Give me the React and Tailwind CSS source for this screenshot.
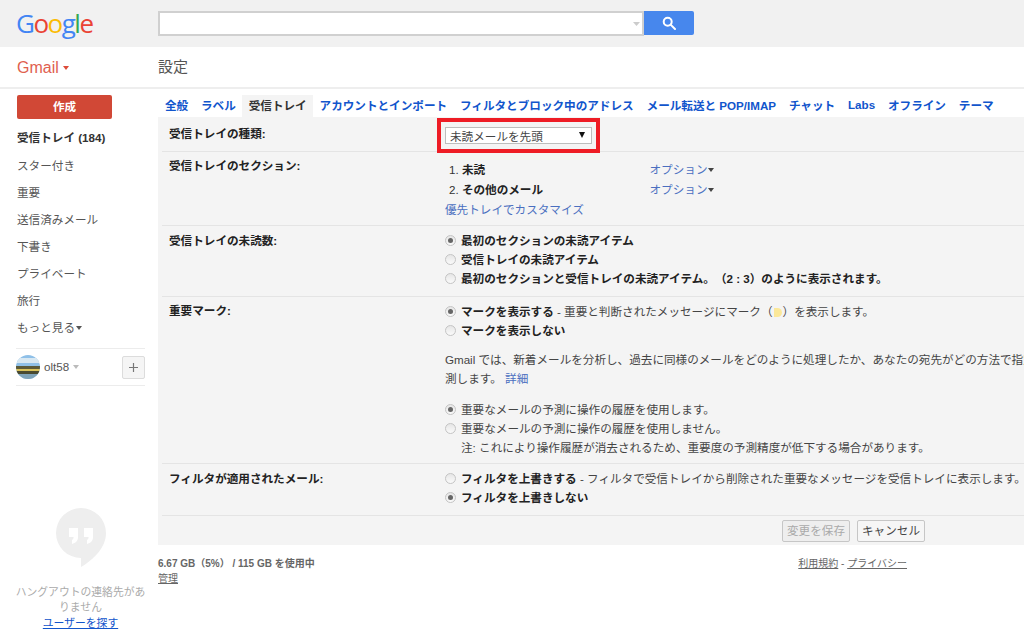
const Caret = ({ c = "#444", w = 7, h = 4, className = "" }) => (
  <svg width={w} height={h} viewBox="0 0 7 4" preserveAspectRatio="none" className={"inline-block align-middle " + className}>
    <path d="M0 0h7L3.5 4z" fill={c} />
  </svg>
);

const Radio = ({ on }) => (
  <span className="mr-[5px] inline-flex h-[11px] w-[11px] shrink-0 items-center justify-center rounded-full border border-[#c4c4c4] bg-gradient-to-b from-[#e6e6e6] to-[#fafafa] align-[-1px]">
    {on && <span className="h-[5px] w-[5px] rounded-full bg-[#666]" />}
  </span>
);

const Line = ({ on, children, className = "" }) => (
  <div className={"flex h-[19px] items-center whitespace-nowrap leading-[19px] " + className}>
    <Radio on={on} />
    <span>{children}</span>
  </div>
);

const Row = ({ label, labelClass = "pt-[5px]", className = "", children }) => (
  <div className={"ml-[4px] flex border-b border-[#e4e4e4] " + className}>
    <div className={"ml-[7px] w-[276px] shrink-0 font-bold text-[#222] leading-[19px] " + labelClass}>{label}</div>
    <div className="min-w-0 flex-1 whitespace-nowrap">{children}</div>
  </div>
);

const tabs = [
  ["全般", false],
  ["ラベル", false],
  ["受信トレイ", true],
  ["アカウントとインポート", false],
  ["フィルタとブロック中のアドレス", false],
  ["メール転送と POP/IMAP", false],
  ["チャット", false],
  ["Labs", false],
  ["オフライン", false],
  ["テーマ", false],
];

const nav = ["スター付き", "重要", "送信済みメール", "下書き", "プライベート", "旅行"];

export default function App() {
  return (
    <div className="h-[638px] w-[1024px] overflow-hidden bg-white font-['Liberation_Sans','Noto_Sans_CJK_JP',sans-serif] text-[11.6px] text-[#444] [text-spacing-trim:space-all]">
      {/* top bar */}
      <header className="flex h-[47px] items-start bg-[#f1f1f1]">
        <div className="w-[158px] pl-[16px] pt-[2px] font-['Open_Sans',sans-serif] text-[26px] leading-[42px] tracking-[-1.5px]">
          <span className="text-[#4285f4]">G</span>
          <span className="text-[#ea4335]">o</span>
          <span className="text-[#fbbc05]">o</span>
          <span className="text-[#4285f4]">g</span>
          <span className="text-[#34a853]">l</span>
          <span className="text-[#ea4335]">e</span>
        </div>
        <div className="mt-[11px] flex h-[25px] w-[486px] items-center justify-end border-2 border-[#d0d0d0] bg-white pr-[2px]">
          <Caret c="#ccc" w={7} />
        </div>
        <div className="mt-[11px] flex h-[24px] w-[50px] items-center justify-center rounded-r-[2px] bg-[#4787ed]">
          <svg width="14" height="14" viewBox="0 0 14 14" fill="none" stroke="#fff" strokeWidth="2">
            <circle cx="5.7" cy="5.7" r="4" />
            <path d="M8.6 8.6L13 13" strokeLinecap="round" />
          </svg>
        </div>
      </header>

      {/* sub bar */}
      <div className="mt-px flex h-[41px] items-center border-b-2 border-[#eeeeee]">
        <div className="flex w-[158px] items-center pl-[17px] text-[16px] text-[#e0604f]">
          Gmail
          <Caret c="#dd4b39" w={6} className="ml-[4px]" />
        </div>
        <div className="text-[15px] text-[#555]">設定</div>
      </div>

      <div className="flex">
        {/* sidebar */}
        <aside className="flex h-[549px] w-[158px] shrink-0 flex-col">
          <div className="ml-[17px] mt-[6px] flex h-[24px] w-[95px] items-center justify-center rounded-[2px] bg-[#d14836] font-bold text-white">
            作成
          </div>
          <div className="mb-px ml-[17px] mt-[5px] flex h-[27px] items-center font-bold text-[#333]">受信トレイ (184)</div>
          {nav.map((n) => (
            <div key={n} className="ml-[17px] flex h-[27px] items-center text-[#555]">
              {n}
            </div>
          ))}
          <div className="ml-[17px] flex h-[27px] items-center text-[#555]">
            もっと見る
            <Caret c="#555" w={6} className="ml-px" />
          </div>
          <div className="ml-[16px] mr-[13px] mt-[7px] flex h-[38px] items-center border-y border-[#ececec]">
            <svg width="24" height="24" viewBox="0 0 24 24" className="shrink-0">
              <defs>
                <clipPath id="av">
                  <circle cx="12" cy="12" r="12" />
                </clipPath>
              </defs>
              <g clipPath="url(#av)">
                <rect width="24" height="24" fill="#8fc0e8" />
                <rect y="3" width="24" height="5" fill="#d8e8f2" />
                <rect y="11" width="24" height="3" fill="#5b5a3a" />
                <rect y="14" width="24" height="2" fill="#d9c25a" />
                <rect y="16" width="24" height="3" fill="#4a4a30" />
                <rect y="19" width="24" height="5" fill="#7fa3b8" />
              </g>
            </svg>
            <span className="ml-[4px] text-[#555]">olt58</span>
            <Caret c="#bbb" w={6} className="ml-[4px]" />
            <div className="ml-auto flex h-[23px] w-[23px] items-center justify-center rounded-[2px] border border-[#dcdcdc] bg-[#f5f5f5]">
              <svg width="9" height="9" viewBox="0 0 9 9" stroke="#777" strokeWidth="1.2">
                <path d="M4.5 0v9M0 4.5h9" />
              </svg>
            </div>
          </div>
          <div className="mt-auto flex flex-col items-center pb-[7px] pl-[14px] pr-[11px] text-center text-[10.8px]">
            <svg width="50" height="60" viewBox="0 0 50 60" className="mb-[17px]">
              <path d="M25 0a25 25 0 0 1 25 25c0 15-13 27-25 34V50A25 25 0 0 1 25 0z" fill="#eeeeee" />
              <path d="M13 20h9v9c0 4-2.500 6-6 7v-4c1-.5 1.600-1.500 1.600-3H13zM28 20h9v9c0 4-2.500 6-6 7v-4c1-.5 1.600-1.500 1.600-3H28z" fill="#fff" />
            </svg>
            <div className="leading-[15.500px] text-[#aaa]">ハングアウトの連絡先がありません</div>
            <div className="leading-[15.500px] text-[#15c] underline">ユーザーを探す</div>
          </div>
        </aside>

        {/* main */}
        <main className="w-[866px] min-w-0">
          <nav className="mt-[6px] flex h-[22px] pl-[0.5px]">
            {tabs.map(([t, active]) => (
              <div
                key={t}
                className={
                  "mx-0 flex items-center whitespace-nowrap px-[6.45px] font-bold " +
                  (active ? "bg-[#f4f4f4] text-[#333]" : "text-[#15c]") +
                  (t === "Labs" ? " pb-[3px]" : "")
                }
              >
                {t}
              </div>
            ))}
          </nav>

          <div className="h-[428px] bg-[#f4f4f4]">
            <Row label="受信トレイの種類:" labelClass="pt-[7px]" className="h-[35px]">
              <div className="-ml-[8px] mt-[1px] w-[163px] border-[4px] border-[#ee1c25] px-[4px] py-[5px]">
                <div className="flex h-[17px] items-center justify-between border border-[#bdbdbd] bg-white pl-[4px] pr-[6px] pt-[2px] text-[#444]">
                  未読メールを先頭
                  <Caret c="#111" w={6} h={6} className="-mt-[4px]" />
                </div>
              </div>
            </Row>

            <Row label="受信トレイのセクション:" labelClass="pt-[4px]" className="h-[74px]">
              <div className="pt-[7.500px] leading-[20px] text-[#333]">
                <div className="flex h-[20px]">
                  <div className="w-[204.500px] pl-[4px]">
                    1. <b className="text-[#222]">未読</b>
                  </div>
                  <span className="text-[#4a6fc0]">オプション</span>
                  <Caret c="#444" w={6} className="ml-[1px] mt-[8px]" />
                </div>
                <div className="flex h-[20px]">
                  <div className="w-[204.500px] pl-[4px]">
                    2. <b className="text-[#222]">その他のメール</b>
                  </div>
                  <span className="text-[#4a6fc0]">オプション</span>
                  <Caret c="#444" w={6} className="ml-[1px] mt-[8px]" />
                </div>
                <div className="text-[#4a6fc0]">優先トレイでカスタマイズ</div>
              </div>
            </Row>

            <Row label="受信トレイの未読数:" className="h-[71px]">
              <div className="pt-[5px]">
                <Line on><b className="text-[#222]">最初のセクションの未読アイテム</b></Line>
                <Line><b className="text-[#222]">受信トレイの未読アイテム</b></Line>
                <Line><b className="text-[#222]">最初のセクションと受信トレイの未読アイテム。（2 : 3）のように表示されます。</b></Line>
              </div>
            </Row>

            <Row label="重要マーク:" labelClass="pt-[4px]" className="h-[167px]">
              <div className="pt-[5px]">
                <Line on>
                  <b className="text-[#222]">マークを表示する</b> - 重要と判断されたメッセージにマーク（
                  <span className="mx-[1px] inline-block h-[9px] w-[8px] rounded-r-full bg-[#fbe89a] align-[-1px]" />
                  ）を表示します。
                </Line>
                <Line><b className="text-[#222]">マークを表示しない</b></Line>
                <div className="mt-[10px] leading-[19px]">
                  Gmail では、新着メールを分析し、過去に同様のメールをどのように処理したか、あなたの宛先がどの方法で指定されているかなどを基に予
                  <br />
                  測します。 <span className="text-[#4a6fc0]">詳細</span>
                </div>
                <div className="mt-[12px]">
                  <Line on>重要なメールの予測に操作の履歴を使用します。</Line>
                  <Line>重要なメールの予測に操作の履歴を使用しません。</Line>
                  <div className="pl-[16px] leading-[19px]">注: これにより操作履歴が消去されるため、重要度の予測精度が低下する場合があります。</div>
                </div>
              </div>
            </Row>

            <Row label="フィルタが適用されたメール:" className="h-[52px]">
              <div className="pt-[5px]">
                <Line>
                  <b className="text-[#222]">フィルタを上書きする</b> - フィルタで受信トレイから削除された重要なメッセージを受信トレイに表示します。
                </Line>
                <Line on><b className="text-[#222]">フィルタを上書きしない</b></Line>
              </div>
            </Row>

            <div className="flex justify-end gap-[7px] pr-[99px] pt-[4px]">
              <div className="flex h-[22px] w-[68px] items-center justify-center rounded-[2px] border border-[#c6c6c6] bg-[#eeeeee] text-[#aaa]">
                変更を保存
              </div>
              <div className="flex h-[22px] w-[68px] items-center justify-center rounded-[2px] border border-[#c6c6c6] bg-[#f6f6f6] text-[#444]">
                キャンセル
              </div>
            </div>
          </div>

          <footer className="flex justify-between pr-[117px] pt-[11px] text-[10px] leading-[15px] text-[#666]">
            <div>
              <div className="font-bold">6.67 GB（5%） / 115 GB を使用中</div>
              <div className="underline">管理</div>
            </div>
            <div>
              <span className="underline">利用規約</span> - <span className="underline">プライバシー</span>
            </div>
          </footer>
        </main>
      </div>
    </div>
  );
}
